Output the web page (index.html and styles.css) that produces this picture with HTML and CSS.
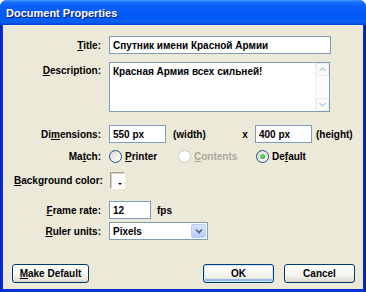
FILE: index.html
```html
<!DOCTYPE html>
<html lang="en">
<head>
  <meta charset="UTF-8" />
  <title>Document Properties</title>
  <link rel="stylesheet" href="styles.css">
</head>
<body>
  <div class="window">
    <div class="titlebar"><span>Document Properties</span></div>
    <div class="client">
      <div class="row row-title">
        <div class="lbl"><u>T</u>itle:</div>
        <div class="box wide">Спутник имени Красной Армии</div>
      </div>
      <div class="row row-desc">
        <div class="lbl"><u>D</u>escription:</div>
        <div class="box area">
          <div class="area-text">Красная Армия всех сильней!</div>
          <div class="scroll">
            <div class="sbtn"><svg width="7" height="5" viewBox="0 0 7 5"><path d="M0.5 4 L3.5 1 L6.5 4" fill="none" stroke="#c3cbd8" stroke-width="1.4"/></svg></div>
            <div class="sbtn"><svg width="7" height="5" viewBox="0 0 7 5"><path d="M0.5 1 L3.5 4 L6.5 1" fill="none" stroke="#c3cbd8" stroke-width="1.4"/></svg></div>
          </div>
        </div>
      </div>
      <div class="row row-dims">
        <div class="lbl">Di<u>m</u>ensions:</div>
        <div class="box dim">550 px</div>
        <div class="unit-w">(width)</div>
        <div class="times">x</div>
        <div class="box dim">400 px</div>
        <div class="unit-h">(height)</div>
      </div>
      <div class="row row-match">
        <div class="lbl">Ma<u>t</u>ch:</div>
        <div class="opt opt-1"><span class="radio"></span><span><u>P</u>rinter</span></div>
        <div class="opt opt-2 disabled"><span class="radio"></span><span><u>C</u>ontents</span></div>
        <div class="opt"><span class="radio checked"></span><span>De<u>f</u>ault</span></div>
      </div>
      <div class="row row-bg">
        <div class="lbl"><u>B</u>ackground color:</div>
        <div class="swatch"><span class="tri"></span></div>
      </div>
      <div class="row row-rate">
        <div class="lbl"><u>F</u>rame rate:</div>
        <div class="box rate">12</div>
        <div class="unit-fps">fps</div>
      </div>
      <div class="row row-ruler">
        <div class="lbl"><u>R</u>uler units:</div>
        <div class="box select">
          <span class="select-text">Pixels</span>
          <span class="drop"><svg width="8" height="6" viewBox="0 0 8 6"><path d="M1 1.5 L4 4.5 L7 1.5" fill="none" stroke="#4d6185" stroke-width="1.6"/></svg></span>
        </div>
      </div>
      <div class="buttons">
        <div class="btn btn-make"><span><u>M</u>ake Default</span></div>
        <div class="spacer"></div>
        <div class="btn btn-ok">OK</div>
        <div class="btn btn-cancel">Cancel</div>
      </div>
    </div>
  </div>
</body>
</html>
```

FILE: styles.css
```css
body {
  margin: 0;
  font-family: "Liberation Sans", Arial, sans-serif;
  font-size: 10px;
  font-weight: bold;
  color: #000;
}

.window {
  width: 366px;
  height: 292px;
  display: flex;
  flex-direction: column;
  background: linear-gradient(90deg, #0019cf, #0831d9 2px, #0831d9 363px, #001ea0);
  border-radius: 7px 7px 0 0;
  overflow: hidden;
}

.titlebar {
  height: 25px;
  flex: none;
  display: flex;
  align-items: center;
  padding-left: 6px;
  background: linear-gradient(#4aa0ff 0, #1a70ff 2px, #0a5ef8 7px, #0058f4 16px, #0a60f0 22px, #0042dc 25px);
  color: #fff;
  font-size: 11px;
  text-shadow: 1px 1px 0 #0a1889;
}

.client {
  flex: 1;
  margin: 0 3px 3px;
  background: #ece9d8;
  display: flex;
  flex-direction: column;
  padding-left: 11px;
}

.row {
  display: flex;
  align-items: center;
}

.lbl {
  width: 87px;
  margin-right: 8px;
  text-align: right;
  flex: none;
  white-space: nowrap;
}

.box {
  background: #fff;
  border: 1px solid #7f9db9;
  height: 18px;
  box-sizing: border-box;
  padding-left: 3px;
  display: flex;
  align-items: center;
  white-space: nowrap;
}

.row-title { margin-top: 11px; }
.wide { width: 222px; }

.row-desc { margin-top: 8px; align-items: flex-start; }
.row-desc .lbl { padding-top: 3px; }
.area {
  width: 221px;
  height: 50px;
  align-items: stretch;
  padding: 0;
}
.area-text {
  flex: 1;
  padding: 3px 0 0 3px;
}
.scroll {
  width: 13px;
  background: #fbfbf8;
  border-left: 1px solid #f0efe8;
  display: flex;
  flex-direction: column;
  justify-content: space-between;
}
.sbtn {
  height: 13px;
  display: flex;
  align-items: center;
  justify-content: center;
  border: 1px solid #eeede5;
  border-radius: 2px;
  box-sizing: border-box;
}

.row-dims { margin-top: 13px; }
.dim { width: 57px; }
.unit-w { width: 73px; padding-left: 7px; box-sizing: border-box; }
.times { width: 16px; text-align: center; padding-right: 4px; box-sizing: border-box; }
.unit-h { padding-left: 4px; }

.row-match { margin-top: 6px; height: 14px; }
.opt {
  display: flex;
  align-items: center;
  gap: 3px;
}
.opt-1 { width: 69px; }
.opt-2 { width: 78px; }
.disabled { color: #aca899; }

.radio {
  width: 11px;
  height: 11px;
  border: 1px solid #1c5180;
  border-radius: 50%;
  background: linear-gradient(135deg, #dcdcd4, #fff);
  display: flex;
  align-items: center;
  justify-content: center;
}
.disabled .radio {
  border-color: #cac8bb;
  background: #fff;
}
.radio.checked::after {
  content: "";
  width: 5px;
  height: 5px;
  border-radius: 50%;
  background: radial-gradient(circle at 35% 35%, #75e572, #21a121);
}

.row-bg { margin-top: 9px; }
.swatch {
  width: 15px;
  height: 17px;
  margin-left: 1px;
  box-sizing: border-box;
  border: 1px solid #a6a597;
  border-right-color: #fff;
  border-bottom-color: #fff;
  background: #fff;
  box-shadow: inset 1px 1px 0 #d4d0c8;
  position: relative;
}
.tri {
  position: absolute;
  right: 2px;
  bottom: 3px;
  border-left: 2px solid transparent;
  border-right: 2px solid transparent;
  border-top: 2px solid #000;
}

.row-rate { margin-top: 12px; }
.rate { width: 42px; }
.unit-fps { padding-left: 6px; }

.row-ruler { margin-top: 3px; }
.select {
  width: 99px;
  justify-content: space-between;
  padding-right: 1px;
}
.drop {
  width: 15px;
  height: 14px;
  border-radius: 2px;
  background: linear-gradient(#d6e3fe, #b7cdfb);
  border: 1px solid #b9cdf6;
  box-sizing: border-box;
  display: flex;
  align-items: center;
  justify-content: center;
}

.buttons {
  margin-top: auto;
  margin-bottom: 6px;
  margin-left: -2px;
  padding-right: 8px;
  display: flex;
  gap: 10px;
}
.spacer { flex: 1; }
.btn {
  height: 19px;
  box-sizing: border-box;
  border: 1px solid #003c74;
  border-radius: 3px;
  background: linear-gradient(#fff, #f4f3ee 60%, #e3e1d7 90%, #d6d0c5);
  display: flex;
  align-items: center;
  justify-content: center;
}
.btn-make { width: 77px; }
.btn-ok {
  width: 71px;
  box-shadow: inset 0 0 0 1px #cee7ff, inset 0 -2px 0 1px #98b8ea;
}
.btn-cancel { width: 71px; }
```
